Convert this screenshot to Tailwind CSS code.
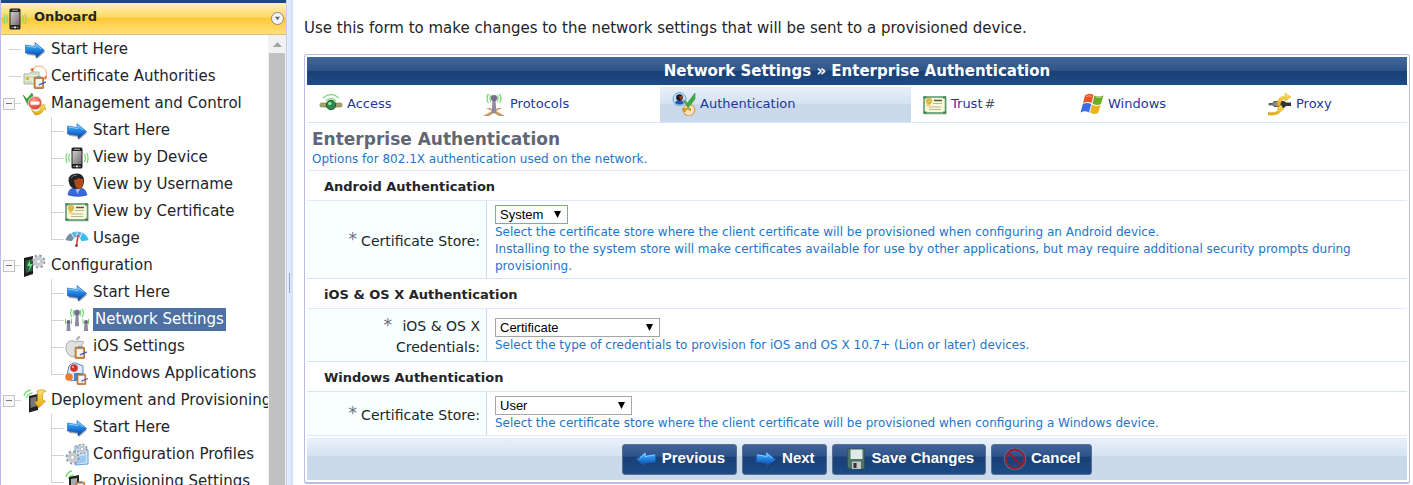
<!DOCTYPE html>
<html lang="en">
<head>
    <meta charset="UTF-8">
    <meta name="viewport" content="width=device-width, initial-scale=1.0">
    <title>Onboard - Network Settings</title>
    <script src="https://cdn.jsdelivr.net/npm/@tailwindcss/browser@4"></script>
</head>
<body class="flex h-screen overflow-hidden bg-white font-['DejaVu_Sans',sans-serif] text-[15px] text-[#22252b]">

    <!-- Icon sprite (kept rendered at zero size, gradients are lost with display none) -->
    <svg class="absolute size-0" xmlns="http://www.w3.org/2000/svg">
        <defs>
            <linearGradient id="g-blue" x1="0" y1="0" x2="0" y2="1"><stop offset="0" stop-color="#5cc0fa"/><stop offset=".5" stop-color="#1f7fe0"/><stop offset="1" stop-color="#0a3796"/></linearGradient>
            <linearGradient id="g-phone" x1="0" y1="0" x2="1" y2="1"><stop offset="0" stop-color="#cfcfcf"/><stop offset="1" stop-color="#6d6d6d"/></linearGradient>
            <linearGradient id="g-gold" x1="0" y1="0" x2="0" y2="1"><stop offset="0" stop-color="#ffe36a"/><stop offset="1" stop-color="#e0a80c"/></linearGradient>
            <radialGradient id="g-red" cx=".4" cy=".3" r=".8"><stop offset="0" stop-color="#ff9d90"/><stop offset="1" stop-color="#d5322a"/></radialGradient>
        </defs>
        <symbol id="arrow" viewBox="0 0 24 24">
            <path d="M4 10l9 1V7l9 7-8 7v-3L4 17z" fill="#333" opacity=".4"/>
            <path d="M2.500 7l9.500 1.500V4.500l9.500 8L13 20v-3.500L2.500 15z" fill="url(#g-blue)" stroke="#1c5cb4" stroke-width=".6"/>
            <path d="M3.500 8l9.500 1.500V6.500l5 4.500" fill="none" stroke="#9bdcff" stroke-width=".8"/>
        </symbol>
        <symbol id="phone" viewBox="0 0 24 24">
            <g fill="none" stroke="#7fdc7c" stroke-width="1.300"><path d="M4.500 8q-1.500 4 0 8M2 7q-2 5 0 10M19.500 8q1.500 4 0 8M22 7q2 5 0 10"/></g>
            <rect x="6.500" y="1.500" width="11" height="21" rx="1.500" fill="#222"/>
            <rect x="7.500" y="5" width="9" height="13" fill="url(#g-phone)"/>
            <path d="M9 3.300h6M8.500 20.300h2M13.500 20.300h2" stroke="#aaa"/>
            <rect x="11" y="19.500" width="2" height="1.700" fill="#eee"/>
        </symbol>
        <symbol id="cert" viewBox="0 0 24 24">
            <rect x="1.500" y="4.500" width="22" height="17" fill="#999" opacity=".5"/>
            <rect x="1" y="4" width="21.500" height="16" fill="#fbf8d8" stroke="#5f9a6f" stroke-width="1.600"/>
            <path d="M.5 3.500h3v2h-3zM20 3.500h3v2h-3zM.5 18.500h3v2h-3zM20 18.500h3v2h-3z" fill="#3f8457"/>
            <path d="M11 7.500h8" stroke="#54544c" stroke-width="1.500"/>
            <path d="M10 10.500h9M6 14h12M6 16.500h12" stroke="#b5b49c"/>
            <path d="M4.500 8l-1 6 2-1 2 1-.5-5" fill="#e7d36a"/>
            <circle cx="6" cy="8" r="2.800" fill="#dcbd45" stroke="#c09f2c" stroke-width=".5"/>
        </symbol>
        <symbol id="clip" viewBox="0 0 12 12">
            <rect x="1" y="2" width="8" height="9.500" rx=".5" fill="#d98a3d" stroke="#9a5a1f" stroke-width=".6"/>
            <rect x="2.300" y="3.500" width="5.400" height="6.500" fill="#f6f6fb"/>
            <rect x="3.300" y="1" width="3.400" height="2" fill="#8a8a8a"/>
            <path d="M5 8.500l6-2.500" stroke="#4a5fc0" stroke-width="1.200"/>
        </symbol>
        <symbol id="gear" viewBox="0 0 16 16">
            <circle cx="8" cy="8" r="6.300" fill="none" stroke="#8e969c" stroke-width="2.200" stroke-dasharray="2.500 2.450"/>
            <circle cx="8" cy="8" r="4.200" fill="none" stroke="#c6ccd1" stroke-width="3"/>
            <circle cx="8" cy="8" r="2.200" fill="#fff" stroke="#8e969c" stroke-width=".7"/>
        </symbol>
        <symbol id="authorities" viewBox="0 0 24 24">
            <circle cx="16" cy="8.500" r="7.500" fill="none" stroke="#f5a055" stroke-width=".9"/>
            <path d="M7 4l4-1-1 4zM21 12l3-1-1 4z" fill="#ed5d2b"/>
            <path d="M1 9h5l2-2h8v12H1z" fill="#e5edd5" stroke="#8daa8b" stroke-width=".8"/>
            <path d="M2 12h12M2 17h7M8 9h6" stroke="#b6c4a9" stroke-width=".8"/>
            <circle cx="4.500" cy="13.500" r="1.800" fill="#dcb939"/>
            <use href="#clip" x="10" y="10" width="14" height="14"/>
        </symbol>
        <symbol id="manage" viewBox="0 0 24 24">
            <path d="M0 3l4 4 5-6 1 3-5 9z" fill="#2faa33" stroke="#1f7f27" stroke-width=".5"/>
            <circle cx="12" cy="11" r="6.800" fill="url(#g-red)" stroke="#f4d4cf" stroke-width=".8"/>
            <rect x="7.500" y="9.500" width="9" height="3.200" rx=".6" fill="#fff"/>
            <path d="M8 17l4 3q5 0 6-4l-2-1 5-3 2 6-2-1q-2 6-9 6z" fill="url(#g-gold)" stroke="#bd8f18" stroke-width=".5"/>
        </symbol>
        <symbol id="user" viewBox="0 0 24 24">
            <path d="M3 22q0-6 6-7h7q5 1 6 7-9 3-19 0z" fill="#3768dc" stroke="#1d43a8" stroke-width=".5"/>
            <path d="M10 15l2.500 6 3-6z" fill="#9cc2ff"/>
            <path d="M3.500 8Q3 1 11 .5q8-.5 8 7.500 0 7-6 8-8 1-9.500-8z" fill="#232323"/>
            <path d="M9 7q3 0 4-2 3 1 5 1 1 10-4 10-4 0-5-9z" fill="#b04a1c"/>
            <path d="M6 5q2-3 6-3" stroke="#777" fill="none"/>
        </symbol>
        <symbol id="usage" viewBox="0 0 24 24">
            <path d="M.5 13Q3 5 12 4.500q9 .5 11.500 8.500l-7 1q-1-4-4.500-4t-5 4z" fill="#5fb4e6"/>
            <path d="M.5 13Q2 8 6 6l3 5-2.500 3z" fill="#7790a3"/>
            <path d="M17 5.500q5 2.500 6.500 7.500l-7 1-1.500-3z" fill="#35bff0"/>
            <path d="M6 6l3 5M12 4.500V10M17 5.500L15 11" stroke="#fff" stroke-width=".8"/>
            <path d="M13 8l-1.500 11" stroke="#d83a32" stroke-width="1.600"/>
            <circle cx="11.500" cy="18.500" r="1.500" fill="#9a4540"/>
        </symbol>
        <symbol id="config" viewBox="0 0 24 24">
            <path d="M1 4l9-2v18l-9 3z" fill="#1b1b1b"/>
            <path d="M2.500 6.500l7-1.500v12l-7 2z" fill="#2c5b42"/>
            <path d="M7 6l-3 6h3l-2 6 5-8H7z" fill="#68e27b"/>
            <use href="#gear" x="8" y="0" width="15" height="15"/>
        </symbol>
        <symbol id="mast" viewBox="0 0 24 24">
            <g fill="none" stroke="#79d977" stroke-width="1.300"><path d="M9 2q-2 3 0 7M6.500 1Q3.500 5 6.500 10M15 2q2 3 0 7M17.500 1q3 4 0 9"/></g>
            <path d="M10.500 7h3l.8 13H9.700z" fill="#8d88a4"/>
            <circle cx="12" cy="5" r="2.800" fill="#77718f" stroke="#4e4a66" stroke-width=".5"/>
        </symbol>
        <symbol id="network" viewBox="0 0 24 24">
            <use href="#mast" x="1" y="0" width="22" height="22"/>
            <path d="M2 14h3l.5 9h-4zM19.500 14h3l.5 9h-4z" fill="#8d88a4"/>
            <circle cx="3.500" cy="14" r="2" fill="#6a6582"/><circle cx="21" cy="14" r="2" fill="#6a6582"/>
            <path d="M.5 11v5M6.500 11v5M18 11v5M23.500 11v5" stroke="#70cf6e"/>
        </symbol>
        <symbol id="apple" viewBox="0 0 24 24">
            <path d="M11 6q-1-4 4-5.500Q16 4 11 6z" fill="#b7babd"/>
            <path d="M11 7q4-2 8 0-3 2-2 6 0 3 3 4-2 5-5 5-4-1-7 0-5-1-7-7Q0 8 5 6q3-1 6 1z" fill="#e0e0df" stroke="#96999b" stroke-width=".8"/>
            <use href="#clip" x="9" y="10" width="14" height="14"/>
        </symbol>
        <symbol id="winapps" viewBox="0 0 24 24">
            <path d="M4 4q4-5 9-2l5 2v12l-12 3-4-6z" fill="#dceafa" stroke="#5b83c9"/>
            <circle cx="9" cy="6" r="3.800" fill="#d2322a"/><circle cx="8" cy="5" r="1" fill="#fbb"/>
            <circle cx="4" cy="15" r="3.800" fill="#f07a2c"/>
            <rect x="9" y="11" width="7" height="8" fill="#3c86e0"/>
            <use href="#clip" x="11" y="10" width="13" height="13"/>
        </symbol>
        <symbol id="deploy" viewBox="0 0 24 24">
            <g fill="none" stroke="#79e078" stroke-width="1.400"><path d="M1 7q1-5 7-6M3.500 9q1-4 6-5"/></g>
            <path d="M6 7l9-2v16l-9 2.500z" fill="#222"/>
            <path d="M7.500 9l6-1.500V17l-6 2z" fill="#777"/>
            <path d="M14 2q5-3 9 0-4 1-3.500 4v5l3 1-7 7-4-6 3-1V6q0-2-.5-4z" fill="url(#g-gold)" stroke="#c08a08" stroke-width=".6"/>
        </symbol>
        <symbol id="profiles" viewBox="0 0 24 24">
            <path d="M10 3h9l4 4v14l-13 1z" fill="#cfe5f8" stroke="#6a9bd2"/>
            <path d="M12 14l9-2v7l-9 2z" fill="#9ac8f0"/>
            <use href="#gear" x="0" y="7" width="15" height="15"/>
            <use href="#gear" x="11" y="0" width="12" height="12"/>
        </symbol>
        <symbol id="provision" viewBox="0 0 24 24">
            <g fill="none" stroke="#79e078" stroke-width="1.400"><path d="M1 7q1-5 6-6M3.500 9q1-3 5-4"/></g>
            <path d="M4 7l10-2v17l-10 1z" fill="#222"/>
            <path d="M6 9l6-1v9l-6 1z" fill="#aaa"/>
            <use href="#clip" x="10" y="10" width="13" height="13"/>
        </symbol>
        <symbol id="access" viewBox="0 0 24 24">
            <g fill="none" stroke="#83dd80" stroke-width="1.400"><path d="M4 5q8-7 16 0M7 8q5-5 10 0"/></g>
            <rect x="1" y="10" width="22" height="4" rx="1.500" fill="#a6a66a" stroke="#75754a" stroke-width=".6"/>
            <circle cx="12" cy="12" r="4.700" fill="#2f8a4d" stroke="#1c5a30"/>
            <circle cx="10.800" cy="10.500" r="1.600" fill="#a6ecb6"/>
        </symbol>
        <symbol id="protocols" viewBox="0 0 24 24">
            <path d="M4 15l6 3-9 5h6l5-3 5 3h6l-9-5 6-3h-4l-4 2-4-2z" fill="#c79a66"/>
            <use href="#mast" x="0" y="0" width="24" height="24"/>
        </symbol>
        <symbol id="authn" viewBox="0 0 24 24">
            <circle cx="7.500" cy="7" r="6.500" fill="#bfe0f7" stroke="#6da3d0"/>
            <path d="M3 11q1-3 4.500-3t4.500 3q-4 3-9 0z" fill="#2553bd"/>
            <circle cx="7.500" cy="5.500" r="3.300" fill="#1f1b1e"/><path d="M7 4h3v3.500H8z" fill="#953d1b"/>
            <circle cx="17" cy="18" r="5.800" fill="#fae0bd" stroke="#d89d5d" stroke-width="1.200"/>
            <path d="M10 16h9v3h-2v-1h-3v2h-3z" fill="#cda034"/>
            <path d="M11.500 8l4 3L23 1v6l-7 9z" fill="#3dad43" stroke="#26832e" stroke-width=".5"/>
        </symbol>
        <symbol id="windows" viewBox="0 0 24 24">
            <path d="M5 2.500q4-3 8.500-.5L11.500 10Q8 8 3 10z" fill="#ea5420"/>
            <path d="M14.500 2.500q4 2 9 0L21 11q-5 2-8.500-.5z" fill="#69ad24"/>
            <path d="M2.800 11q4-2 8.500 0L9 19.500q-4-2.500-8.500 0z" fill="#3d6ce4"/>
            <path d="M12 11.500q4 2.500 8.800.5L18 20q-4 2-8-.5z" fill="#eeb414"/>
            <path d="M6 3.500q3-1.500 6 0M16 4q3 1 6 0" stroke="#fff" stroke-opacity=".45" fill="none"/>
        </symbol>
        <symbol id="proxy" viewBox="0 0 24 24">
            <path d="M1 10.500h4l1-2h5v5H6l-1-1.500H1z" fill="#888" stroke="#444" stroke-width=".8"/>
            <path d="M12 8h4l2 1.500h5V13h-5l-2 2h-4z" fill="#333"/>
            <path d="M9 13Q9 3 17 3V0l6 4-6 4V6q-4 0-5 7z" fill="url(#g-gold)" stroke="#d0a21a" stroke-width=".4"/>
            <path d="M0 19q8 2 11-3H9l4-4 3 5h-2q-3 6-14 5z" fill="url(#g-gold)" stroke="#d0a21a" stroke-width=".4"/>
        </symbol>
        <symbol id="disk" viewBox="0 0 24 24">
            <path d="M3.500 2h17v20H6l-2.500-2z" fill="#4c7468" stroke="#2c4d45" stroke-width=".6"/>
            <path d="M6.500 2.500h12V12h-12z" fill="#e0ebe7"/>
            <path d="M8 14.500h9V22H8z" fill="#c4c4c4"/><path d="M9.500 16h3v5h-3z" fill="#333"/>
        </symbol>
        <symbol id="cancel" viewBox="0 0 24 24">
            <g fill="none"><circle cx="12" cy="12" r="10" stroke="#4f709c" stroke-width="2.500"/><circle cx="12" cy="12" r="9.500" stroke="#991a26" stroke-width="1.800"/><path d="M5 5.500l14 13" stroke="#991a26" stroke-width="1.800"/></g>
        </symbol>
    </svg>

    <!-- Sidebar -->
    <aside class="flex w-[286px] shrink-0 flex-col border-l border-[#b8bee8]">
        <div class="h-[3px] shrink-0 bg-[#1d4a87]"></div>
        <header class="flex h-8 shrink-0 items-center border-b border-[#d9bd85] bg-[linear-gradient(#fff3b8,#ffd968_45%,#ffc934_50%,#ffe07c)] pl-[2px] pr-[2px]">
            <svg class="size-6"><use href="#phone"/></svg>
            <h2 class="ml-[7px] flex-1 pb-1 text-[13px] font-bold leading-5">Onboard</h2>
            <button type="button" aria-label="Collapse" class="flex size-[13px] items-center justify-center rounded-full border border-[#84868f] bg-[#f4f4f8]">
                <svg class="size-[5px]" viewBox="0 0 6 6"><path d="M0 1h6L3 5z" fill="#666"/></svg>
            </button>
        </header>
        <div class="flex min-h-0 flex-1">
            <nav class="min-w-0 flex-1 overflow-hidden whitespace-nowrap pt-px">
                <ul>
                    <li class="flex h-[27px] items-center pl-2"><span class="mr-[2px] w-3 border-t border-[#d2d2d2]"></span><svg class="mr-1 size-6 shrink-0"><use href="#arrow"/></svg><a href="#">Start Here</a></li>
                    <li class="flex h-[27px] items-center pl-2"><span class="mr-[2px] w-3 border-t border-[#d2d2d2]"></span><svg class="mr-1 size-6 shrink-0"><use href="#authorities"/></svg><a href="#">Certificate Authorities</a></li>
                    <li>
                        <div class="flex h-[27px] items-center pl-[2px]">
                            <button type="button" aria-label="Collapse" class="flex size-3 shrink-0 items-center justify-center border border-[#c4c4c4] bg-[#f7f7f7]"><span class="h-px w-[6px] bg-[#777]"></span></button>
                            <span class="mr-[2px] w-[6px] shrink-0 border-t border-[#d2d2d2]"></span><svg class="mr-1 size-6 shrink-0"><use href="#manage"/></svg><a href="#">Management and Control</a>
                        </div>
                        <ul class="pl-[50px]">
                            <li class="flex h-[27px] items-center"><span class="flex w-[14px] flex-col self-stretch border-l border-[#d2d2d2]"><span class="h-[15px] w-3 border-b border-[#d2d2d2]"></span></span><svg class="mr-1 size-6 shrink-0"><use href="#arrow"/></svg><a href="#">Start Here</a></li>
                            <li class="flex h-[27px] items-center"><span class="flex w-[14px] flex-col self-stretch border-l border-[#d2d2d2]"><span class="h-[15px] w-3 border-b border-[#d2d2d2]"></span></span><svg class="mr-1 size-6 shrink-0"><use href="#phone"/></svg><a href="#">View by Device</a></li>
                            <li class="flex h-[27px] items-center"><span class="flex w-[14px] flex-col self-stretch border-l border-[#d2d2d2]"><span class="h-[15px] w-3 border-b border-[#d2d2d2]"></span></span><svg class="mr-1 size-6 shrink-0"><use href="#user"/></svg><a href="#">View by Username</a></li>
                            <li class="flex h-[27px] items-center"><span class="flex w-[14px] flex-col self-stretch border-l border-[#d2d2d2]"><span class="h-[15px] w-3 border-b border-[#d2d2d2]"></span></span><svg class="mr-1 size-6 shrink-0"><use href="#cert"/></svg><a href="#">View by Certificate</a></li>
                            <li class="flex h-[27px] items-center"><span class="w-[14px] self-stretch"><span class="block h-[15px] w-[13px] border-b border-l border-[#d2d2d2]"></span></span><svg class="mr-1 size-6 shrink-0"><use href="#usage"/></svg><a href="#">Usage</a></li>
                        </ul>
                    </li>
                    <li>
                        <div class="flex h-[27px] items-center pl-[2px]">
                            <button type="button" aria-label="Collapse" class="flex size-3 shrink-0 items-center justify-center border border-[#c4c4c4] bg-[#f7f7f7]"><span class="h-px w-[6px] bg-[#777]"></span></button>
                            <span class="mr-[2px] w-[6px] shrink-0 border-t border-[#d2d2d2]"></span><svg class="mr-1 size-6 shrink-0"><use href="#config"/></svg><a href="#">Configuration</a>
                        </div>
                        <ul class="pl-[50px]">
                            <li class="flex h-[27px] items-center"><span class="flex w-[14px] flex-col self-stretch border-l border-[#d2d2d2]"><span class="h-[15px] w-3 border-b border-[#d2d2d2]"></span></span><svg class="mr-1 size-6 shrink-0"><use href="#arrow"/></svg><a href="#">Start Here</a></li>
                            <li class="flex h-[27px] items-center"><span class="flex w-[14px] flex-col self-stretch border-l border-[#d2d2d2]"><span class="h-[15px] w-3 border-b border-[#d2d2d2]"></span></span><svg class="mr-1 size-6 shrink-0"><use href="#network"/></svg><a href="#" aria-current="page" class="bg-[#4e71a2] px-[2px] leading-[23px] text-white">Network Settings</a></li>
                            <li class="flex h-[27px] items-center"><span class="flex w-[14px] flex-col self-stretch border-l border-[#d2d2d2]"><span class="h-[15px] w-3 border-b border-[#d2d2d2]"></span></span><svg class="mr-1 size-6 shrink-0"><use href="#apple"/></svg><a href="#">iOS Settings</a></li>
                            <li class="flex h-[27px] items-center"><span class="w-[14px] self-stretch"><span class="block h-[15px] w-[13px] border-b border-l border-[#d2d2d2]"></span></span><svg class="mr-1 size-6 shrink-0"><use href="#winapps"/></svg><a href="#">Windows Applications</a></li>
                        </ul>
                    </li>
                    <li>
                        <div class="flex h-[27px] items-center pl-[2px]">
                            <button type="button" aria-label="Collapse" class="flex size-3 shrink-0 items-center justify-center border border-[#c4c4c4] bg-[#f7f7f7]"><span class="h-px w-[6px] bg-[#777]"></span></button>
                            <span class="mr-[2px] w-[6px] shrink-0 border-t border-[#d2d2d2]"></span><svg class="mr-1 size-6 shrink-0"><use href="#deploy"/></svg><a href="#">Deployment and Provisioning</a>
                        </div>
                        <ul class="pl-[50px]">
                            <li class="flex h-[27px] items-center"><span class="flex w-[14px] flex-col self-stretch border-l border-[#d2d2d2]"><span class="h-[15px] w-3 border-b border-[#d2d2d2]"></span></span><svg class="mr-1 size-6 shrink-0"><use href="#arrow"/></svg><a href="#">Start Here</a></li>
                            <li class="flex h-[27px] items-center"><span class="flex w-[14px] flex-col self-stretch border-l border-[#d2d2d2]"><span class="h-[15px] w-3 border-b border-[#d2d2d2]"></span></span><svg class="mr-1 size-6 shrink-0"><use href="#profiles"/></svg><a href="#">Configuration Profiles</a></li>
                            <li class="flex h-[27px] items-center"><span class="w-[14px] self-stretch"><span class="block h-[15px] w-[13px] border-b border-l border-[#d2d2d2]"></span></span><svg class="mr-1 size-6 shrink-0"><use href="#provision"/></svg><a href="#">Provisioning Settings</a></li>
                        </ul>
                    </li>
                </ul>
            </nav>
            <!-- Scrollbar -->
            <div class="flex w-[18px] shrink-0 flex-col bg-[#f1f1f1]">
                <div class="flex h-[18px] items-center justify-center"><svg class="h-[5px] w-[9px]" viewBox="0 0 9 5"><path d="M0 5L4.500 0 9 5z" fill="#a3a3a3"/></svg></div>
                <div class="mx-px flex-1 bg-[#c1c1c1]"></div>
            </div>
        </div>
    </aside>
    <div class="flex w-[7px] shrink-0 items-center border-l border-[#c5cdf0] bg-[linear-gradient(90deg,#e8f0fd,#cfdffa)] pt-20 pl-[2px]"><span class="h-5 w-px bg-[#8fa5d0]"></span></div>

    <!-- Content -->
    <main class="min-w-0 flex-1 pl-[11px] pr-[3px] pt-[18px]">
        <p class="mb-[15px] leading-[21px]">Use this form to make changes to the network settings that will be sent to a provisioned device.</p>

        <form class="rounded-[3px] border border-b-2 border-[#b9bfe2] p-[2px] text-[13px]">
            <h1 class="mb-[2px] bg-[linear-gradient(#44669a,#2f5588_48%,#194076_50%,#1e4b86)] text-center text-[15px] font-bold leading-7 text-white">Network Settings » Enterprise Authentication</h1>

            <nav class="grid h-9 grid-cols-[164fr_189fr_251fr_157fr_188fr_151fr] border-b border-[#d8e5fb] leading-[33px] text-[#1d3899]">
                <a href="#" class="flex pl-3"><svg class="mr-1 mt-[6px] size-6"><use href="#access"/></svg>Access</a>
                <a href="#" class="flex pl-[11px]"><svg class="mr-1 mt-[6px] size-6"><use href="#protocols"/></svg>Protocols</a>
                <a href="#" class="flex bg-[linear-gradient(#e8effa,#d5e2f2_48%,#c9d9ea_50%,#cbdaeb)] pl-3"><svg class="mr-1 mt-[5px] size-6"><use href="#authn"/></svg>Authentication</a>
                <a href="#" class="flex pl-3"><svg class="mr-1 mt-[6px] size-6"><use href="#cert"/></svg>Trust<span class="ml-[2px] text-[#4a4f5c]">#</span></a>
                <a href="#" class="flex pl-3"><svg class="mr-1 mt-[6px] size-6"><use href="#windows"/></svg>Windows</a>
                <a href="#" class="flex pl-3"><svg class="mr-1 mt-[6px] size-6"><use href="#proxy"/></svg>Proxy</a>
            </nav>

            <div class="border-b border-[#e0eafc] px-[5px] pb-[2px] pt-[5px]">
                <h2 class="text-[17px] font-bold leading-[23px] text-[#5f6775]">Enterprise Authentication</h2>
                <p class="text-xs leading-[17px] text-[#2176cc]">Options for 802.1X authentication used on the network.</p>
            </div>

            <h3 class="border-b border-[#e0eafc] pl-[17px] pt-[2px] font-bold leading-[27px]">Android Authentication</h3>
            <div class="flex border-b border-[#d6e3fb]">
                <label for="android-store" class="flex w-[180px] shrink-0 items-center justify-end border-r border-[#c9dafa] bg-[#f8ffff] pr-[6px] pt-1 text-[14px] leading-[21px]"><span class="mb-1 mr-1 text-[17px] text-[#6a6f7c]">*</span> Certificate Store:</label>
                <div class="flex flex-1 flex-col items-start justify-center pb-[3px] pl-2 pt-1">
                    <span class="relative inline-flex">
                        <select id="android-store" class="h-[19px] w-[73px] appearance-none border border-[#7b9fe0] bg-white pl-1 font-['Liberation_Sans',sans-serif] text-[13px] leading-[17px] text-black"><option>System</option></select>
                        <svg class="pointer-events-none absolute right-[7px] top-[6px] size-[7px]" viewBox="0 0 7 7"><path d="M0 0h7L3.500 7z"/></svg>
                    </span>
                    <p class="text-xs leading-[17px] text-[#2176cc]">Select the certificate store where the client certificate will be provisioned when configuring an Android device.<br>Installing to the system store will make certificates available for use by other applications, but may require additional security prompts during<br>provisioning.</p>
                </div>
            </div>

            <h3 class="border-b border-[#e0eafc] pl-[17px] pt-[2px] font-bold leading-[27px]">iOS &amp; OS X Authentication</h3>
            <div class="flex border-b border-[#d6e3fb]">
                <label for="ios-cred" class="flex w-[180px] shrink-0 items-start justify-end border-r border-[#c9dafa] bg-[#f8ffff] pb-[3px] pr-[6px] pt-[7px] text-right text-[14px] leading-[21px]"><span class="mr-1 text-[17px] leading-[19px] text-[#6a6f7c]">*</span><span>iOS &amp; OS X<br>Credentials:</span></label>
                <div class="flex flex-1 flex-col items-start justify-center pl-2 pt-[2px]">
                    <span class="relative inline-flex">
                        <select id="ios-cred" class="h-[19px] w-[165px] appearance-none border border-[#a6a6a6] bg-white pl-1 font-['Liberation_Sans',sans-serif] text-[13px] leading-[17px] text-black"><option>Certificate</option></select>
                        <svg class="pointer-events-none absolute right-[7px] top-[6px] size-[7px]" viewBox="0 0 7 7"><path d="M0 0h7L3.500 7z"/></svg>
                    </span>
                    <p class="text-xs leading-[17px] text-[#2176cc]">Select the type of credentials to provision for iOS and OS X 10.7+ (Lion or later) devices.</p>
                </div>
            </div>

            <h3 class="border-b border-[#d6e3fb] pl-[17px] pt-[2px] font-bold leading-[27px]">Windows Authentication</h3>
            <div class="flex border-b border-[#e0eafc]">
                <label for="win-store" class="flex w-[180px] shrink-0 items-center justify-end border-r border-[#c9dafa] bg-[#f8ffff] pr-[6px] pt-1 text-[14px] leading-[21px]"><span class="mb-1 mr-1 text-[17px] text-[#6a6f7c]">*</span> Certificate Store:</label>
                <div class="flex flex-1 flex-col items-start justify-center pb-[3px] pl-2 pt-1">
                    <span class="relative inline-flex">
                        <select id="win-store" class="h-[19px] w-[137px] appearance-none border border-[#a6a6a6] bg-white pl-1 font-['Liberation_Sans',sans-serif] text-[13px] leading-[17px] text-black"><option>User</option></select>
                        <svg class="pointer-events-none absolute right-[7px] top-[6px] size-[7px]" viewBox="0 0 7 7"><path d="M0 0h7L3.500 7z"/></svg>
                    </span>
                    <p class="text-xs leading-[17px] text-[#2176cc]">Select the certificate store where the client certificate will be provisioned when configuring a Windows device.</p>
                </div>
            </div>

            <footer class="mt-[2px] flex h-[42px] items-center justify-center gap-[5px] bg-[linear-gradient(#eaf0fa,#d6e3f2_42%,#c9d9ea_44%,#cbdaeb)] font-['Liberation_Sans',sans-serif] text-[15px] font-bold text-white">
                <button type="button" class="flex h-[31px] items-center rounded-[3px] border border-[#5a6f8c] bg-[linear-gradient(#41629a,#2f5488_38%,#194076_42%,#1e4b86)] px-[11px]"><svg class="mr-1 size-6 -scale-x-100"><use href="#arrow"/></svg><span class="pb-[2px]">Previous</span></button>
                <button type="button" class="flex h-[31px] items-center rounded-[3px] border border-[#5a6f8c] bg-[linear-gradient(#41629a,#2f5488_38%,#194076_42%,#1e4b86)] px-[11px]"><svg class="mr-1 size-6"><use href="#arrow"/></svg><span class="pb-[2px]">Next</span></button>
                <button type="submit" class="flex h-[31px] items-center rounded-[3px] border border-[#5a6f8c] bg-[linear-gradient(#41629a,#2f5488_38%,#194076_42%,#1e4b86)] px-[11px]"><svg class="mr-1 size-6"><use href="#disk"/></svg><span class="pb-[2px]">Save Changes</span></button>
                <button type="button" class="flex h-[31px] items-center rounded-[3px] border border-[#5a6f8c] bg-[linear-gradient(#41629a,#2f5488_38%,#194076_42%,#1e4b86)] px-[11px]"><svg class="mr-1 size-6"><use href="#cancel"/></svg><span class="pb-[2px]">Cancel</span></button>
            </footer>
        </form>
    </main>
</body>
</html>
